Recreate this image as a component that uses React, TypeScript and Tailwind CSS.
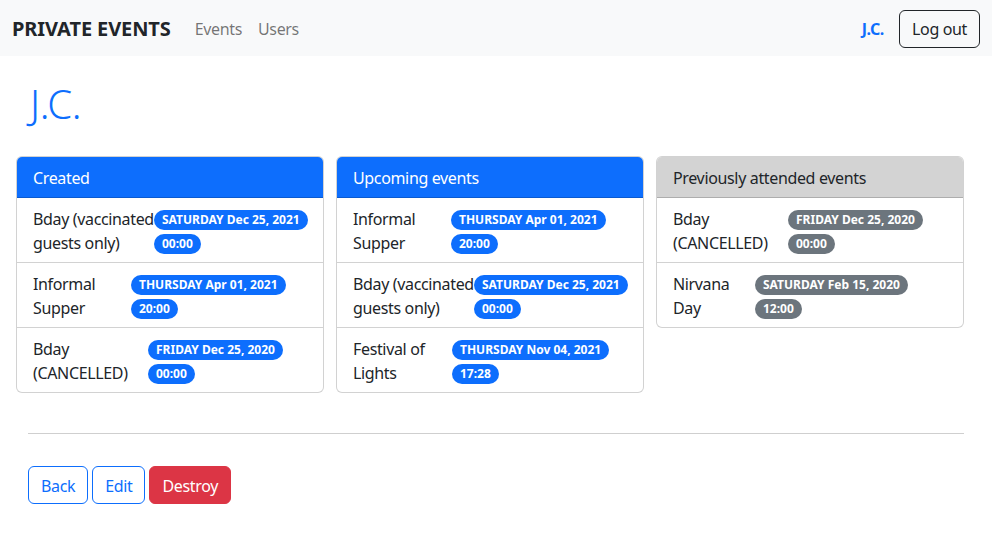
type Ev = { lines: [string, string]; w: number; date: string; time: string };

const created: Ev[] = [
  { lines: ["Bday (vaccinated", "guests only)"], w: 121, date: "SATURDAY Dec 25, 2021", time: "00:00" },
  { lines: ["Informal", "Supper"], w: 98, date: "THURSDAY Apr 01, 2021", time: "20:00" },
  { lines: ["Bday", "(CANCELLED)"], w: 115, date: "FRIDAY Dec 25, 2020", time: "00:00" },
];

const upcoming: Ev[] = [
  { lines: ["Informal", "Supper"], w: 98, date: "THURSDAY Apr 01, 2021", time: "20:00" },
  { lines: ["Bday (vaccinated", "guests only)"], w: 121, date: "SATURDAY Dec 25, 2021", time: "00:00" },
  { lines: ["Festival of", "Lights"], w: 99, date: "THURSDAY Nov 04, 2021", time: "17:28" },
];

const previous: Ev[] = [
  { lines: ["Bday", "(CANCELLED)"], w: 115, date: "FRIDAY Dec 25, 2020", time: "00:00" },
  { lines: ["Nirvana", "Day"], w: 82, date: "SATURDAY Feb 15, 2020", time: "12:00" },
];

function Badge({ text, grey }: { text: string; grey?: boolean }) {
  return (
    <span
      className={`inline-block rounded-full px-[8px] h-[20px] leading-[20px] text-[12px] font-bold tracking-normal text-white whitespace-nowrap ${
        grey ? "bg-[#6c757d]" : "bg-[#0d6efd]"
      }`}
    >
      {text}
    </span>
  );
}

function EventCard({ title, items, grey }: { title: string; items: Ev[]; grey?: boolean }) {
  return (
    <div className="w-[308px] self-start rounded-[6px] border border-[rgba(0,0,0,0.175)] overflow-hidden bg-white">
      <div
        className={`px-4 pt-[9px] pb-[7px] leading-6 border-b border-[rgba(0,0,0,0.175)] ${
          grey ? "bg-[#d3d3d3] text-[#212529]" : "bg-[#0d6efd] text-white"
        }`}
      >
        {title}
      </div>
      {items.map((e, i) => (
        <div
          key={i}
          className={`flex px-4 py-2 leading-6 ${i > 0 ? "border-t border-[rgba(0,0,0,0.175)]" : ""}`}
        >
          <div className="shrink-0 whitespace-nowrap pt-[1px] -mb-[1px]" style={{ width: e.w }}>
            <div>{e.lines[0]}</div>
            <div>{e.lines[1]}</div>
          </div>
          <div className="flex flex-col items-start gap-1 pt-1">
            <Badge text={e.date} grey={grey} />
            <Badge text={e.time} grey={grey} />
          </div>
        </div>
      ))}
    </div>
  );
}

export default function App() {
  return (
    <div className="min-h-[540px] bg-white text-[16px] tracking-[-0.35px] text-[#212529] font-['Segoe_UI','Noto_Sans',sans-serif]">
      <nav className="h-14 bg-[#f8f9fa] flex items-center px-3 pt-[2px]">
        <span className="text-[20px] font-bold tracking-[-0.1px] mr-4">PRIVATE EVENTS</span>
        <a className="px-2 text-[rgba(0,0,0,0.55)]">Events</a>
        <a className="px-2 text-[rgba(0,0,0,0.55)]">Users</a>
        <div className="ml-auto flex items-center">
          <span className="font-bold text-[#0d6efd] mr-[15px]">J.C.</span>
          <button className="h-[38px] px-3 rounded-[6px] border border-[#212529] text-[#212529]">
            Log out
          </button>
        </div>
      </nav>

      <div className="px-[30px]">
        <h1 className="mt-6 mb-[28px] text-[40px] leading-[48px] font-light text-[#0d6efd]">J.C.</h1>
      </div>

      <div className="flex gap-3 px-4">
        <EventCard title="Created" items={created} />
        <EventCard title="Upcoming events" items={upcoming} />
        <EventCard title="Previously attended events" items={previous} grey />
      </div>

      <div className="px-[28px]">
        <hr className="mt-10 border-t border-[#cfcfcf]" />
        <div className="mt-8 flex gap-1">
          <button className="h-[38px] px-3 pt-[1px] rounded-[6px] border border-[#0d6efd] text-[#0d6efd]">Back</button>
          <button className="h-[38px] px-3 pt-[1px] rounded-[6px] border border-[#0d6efd] text-[#0d6efd]">Edit</button>
          <button className="h-[38px] px-3 pt-[1px] rounded-[6px] border border-[#dc3545] bg-[#dc3545] text-white">
            Destroy
          </button>
        </div>
      </div>
    </div>
  );
}
